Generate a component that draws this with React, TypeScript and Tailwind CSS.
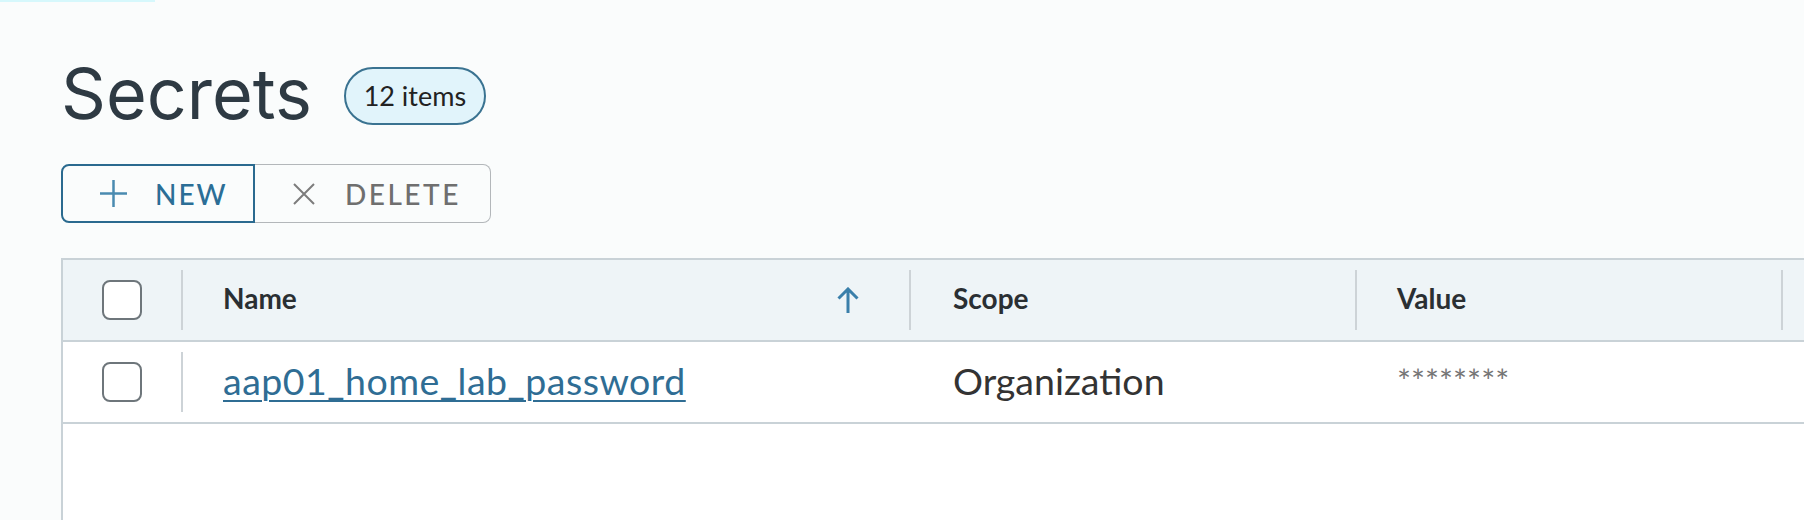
import React from "react";

function Checkbox() {
  return <div className="w-[40px] h-[40px] rounded-[8px] border-2 border-[#6E767B] bg-white" />;
}

function Divider() {
  return <div className="w-[2px] h-[60px] bg-[#CDD3D7] shrink-0" />;
}

export default function App() {
  return (
    <div className="h-screen bg-[#FAFCFC] overflow-hidden font-['Lato',sans-serif]">
      {/* tab indicator */}
      <div className="w-[155px] h-[2px] bg-[#D6F8FC]" />

      <div className="pl-[61px]">
        {/* Title */}
        <div className="flex items-center gap-[32px] mt-[65px] h-[58px]">
          <h1 className="font-['Inter',sans-serif] text-[70px] leading-none text-[#2E3A43] font-normal -mt-[4px]">
            Secrets
          </h1>
          <span className="flex items-center justify-center w-[142px] h-[58px] rounded-full border-2 border-[#3A7391] bg-[#E1F4FB] text-[27px] text-[#222]">
            12 items
          </span>
        </div>

        {/* Buttons */}
        <div className="flex mt-[39px] h-[59px]">
          <button className="flex items-center h-full w-[194px] pl-[36px] rounded-l-[8px] border-2 border-[#2A6A8F] text-[#2B6E96] text-[28px] font-medium tracking-[2px]">
            <svg width="29" height="29" viewBox="0 0 29 29" className="shrink-0">
              <path d="M14.5 1v27M1 14.5h27" stroke="#4A8AB0" strokeWidth="2.5" fill="none" />
            </svg>
            <span className="ml-[27px]">NEW</span>
          </button>
          <button className="flex items-center h-full w-[236px] pl-[38px] rounded-r-[8px] border-y-[1.5px] border-r-[1.5px] border-[#B3B7BA] text-[#6F6F6F] text-[28px] font-medium tracking-[2.5px]">
            <svg width="22" height="22" viewBox="0 0 22 22" className="shrink-0">
              <path d="M1 1l20 20M21 1L1 21" stroke="#7C7C7C" strokeWidth="2" fill="none" />
            </svg>
            <span className="ml-[30px]">DELETE</span>
          </button>
        </div>

        {/* Table */}
        <div className="mt-[35px] w-[1900px] h-[300px] border-l-2 border-t-2 border-[#C9D2D7] bg-white">
          {/* header */}
          <div className="flex items-center h-[82px] bg-[#EEF4F7] border-b-2 border-[#C9D2D7] text-[28px] font-bold text-[#2A2F33]">
            <div className="w-[118px] flex justify-center">
              <Checkbox />
            </div>
            <Divider />
            <div className="w-[726px] flex items-center justify-between pl-[40px] pr-[50px]">
              <span className="-mt-[5px]">Name</span>
              <svg width="22" height="27" viewBox="0 0 22 27">
                <path d="M11 26V2M1.5 11.5L11 2l9.5 9.5" stroke="#3A7FAA" strokeWidth="3" fill="none" />
              </svg>
            </div>
            <Divider />
            <div className="w-[444px] pl-[42px] -mt-[5px]">Scope</div>
            <Divider />
            <div className="w-[424px] pl-[40px] -mt-[5px]">Value</div>
            <Divider />
          </div>

          {/* row */}
          <div className="flex items-center h-[82px] border-b-2 border-[#C9D2D7] bg-white text-[37.5px] text-[#333]">
            <div className="w-[118px] flex justify-center">
              <Checkbox />
            </div>
            <Divider />
            <div className="w-[726px] pl-[40px] -mt-[2px]">
              <a className="text-[#2F6D94] tracking-[0.5px] underline decoration-2 underline-offset-[5px] cursor-pointer">
                aap01_home_lab_password
              </a>
            </div>
            <div className="w-[2px]" />
            <div className="w-[444px] pl-[42px] -mt-[2px]">Organization</div>
            <div className="w-[2px]" />
            <div className="w-[424px] pl-[40px] text-[#757575] text-[33px] -mt-[2px]">********</div>
          </div>
        </div>
      </div>
    </div>
  );
}
